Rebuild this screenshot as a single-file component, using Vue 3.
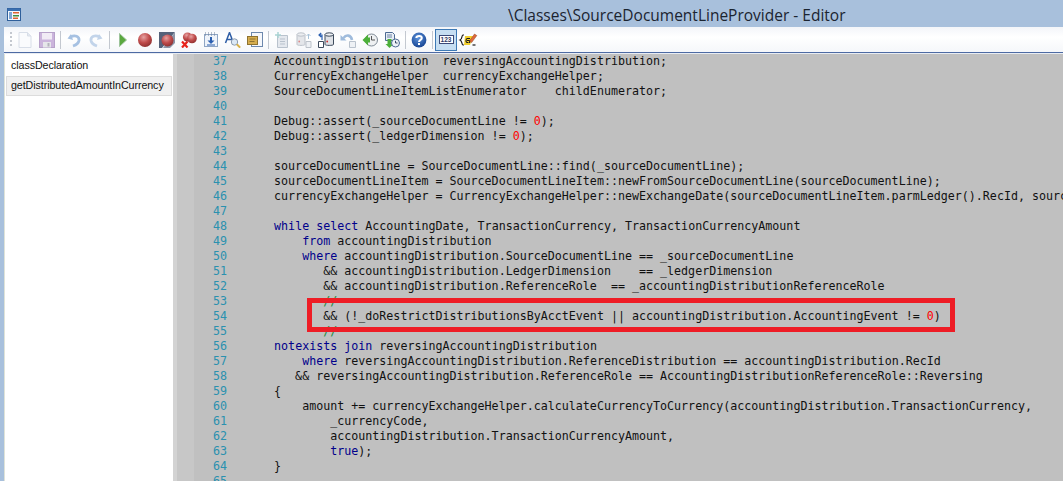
<script setup>
const k = (s) => ({ t: s, c: 'kw' })
const lines = [
  [37, ['    AccountingDistribution  reversingAccountingDistribution;']],
  [38, ['    CurrencyExchangeHelper  currencyExchangeHelper;']],
  [39, ['    SourceDocumentLineItemListEnumerator    childEnumerator;']],
  [40, ['']],
  [41, ['    Debug::assert(_sourceDocumentLine != ', { t: '0', c: 'num' }, ');']],
  [42, ['    Debug::assert(_ledgerDimension != ', { t: '0', c: 'num' }, ');']],
  [43, ['']],
  [44, ['    sourceDocumentLine = SourceDocumentLine::find(_sourceDocumentLine);']],
  [45, ['    sourceDocumentLineItem = SourceDocumentLineItem::newFromSourceDocumentLine(sourceDocumentLine);']],
  [46, ['    currencyExchangeHelper = CurrencyExchangeHelper::newExchangeDate(sourceDocumentLineItem.parmLedger().RecId, sourceDocumentLineItem.parmAccountingDate());']],
  [47, ['']],
  [48, ['    ', k('while select'), ' AccountingDate, TransactionCurrency, TransactionCurrencyAmount']],
  [49, ['        ', k('from'), ' accountingDistribution']],
  [50, ['        ', k('where'), ' accountingDistribution.SourceDocumentLine == _sourceDocumentLine']],
  [51, ['           && accountingDistribution.LedgerDimension    == _ledgerDimension']],
  [52, ['           && accountingDistribution.ReferenceRole  == _accountingDistributionReferenceRole']],
  [53, [{ t: '           //', c: 'cm' }]],
  [54, ['           && (!_doRestrictDistributionsByAcctEvent || accountingDistribution.AccountingEvent != ', { t: '0', c: 'num' }, ')']],
  [55, [{ t: '           //', c: 'cm' }]],
  [56, ['    ', k('notexists join'), ' reversingAccountingDistribution']],
  [57, ['        ', k('where'), ' reversingAccountingDistribution.ReferenceDistribution == accountingDistribution.RecId']],
  [58, ['       && reversingAccountingDistribution.ReferenceRole == AccountingDistributionReferenceRole::Reversing']],
  [59, ['    {']],
  [60, ['        amount += currencyExchangeHelper.calculateCurrencyToCurrency(accountingDistribution.TransactionCurrency,']],
  [61, ['            _currencyCode,']],
  [62, ['            accountingDistribution.TransactionCurrencyAmount,']],
  [63, ['            ', k('true'), ');']],
  [64, ['    }']],
  [65, ['']],
]
const norm = (p) => (typeof p === 'string' ? { t: p, c: '' } : p)
</script>

<template>
  <div class="win">
    <header class="title">
      <svg class="appicon" width="14" height="13" viewBox="0 0 14 13">
        <rect x="0.5" y="0.5" width="13" height="12" fill="#f4f7fb" stroke="#2f5f9a" />
        <rect x="0.5" y="0.5" width="13" height="2.5" fill="#3a6fb0" />
        <rect x="2" y="4" width="3" height="7" fill="#7fa6d4" />
        <rect x="6" y="4" width="6" height="1.5" fill="#e0622e" />
        <rect x="6" y="7" width="6" height="1.5" fill="#3f8f3f" />
        <rect x="6" y="9.5" width="5" height="1.5" fill="#e0622e" />
      </svg>
      <span class="title-text">\Classes\SourceDocumentLineProvider - Editor</span>
    </header>

    <div class="toolbar">
      <span class="grip"></span>
      <!-- new -->
      <svg class="ic" viewBox="0 0 16 16"><path d="M2 0.5h8.5l3.5 3.5v11.5H2z" fill="#fafbfd" stroke="#d8dee8"/><path d="M10.5 0.5v3.5h3.5" fill="#e4e9f1" stroke="#d8dee8"/></svg>
      <!-- save disabled -->
      <svg class="ic" viewBox="0 0 16 16"><rect x="0.5" y="0.5" width="15" height="15" fill="#cbb4dc" stroke="#b7a2ca"/><rect x="3" y="1" width="10" height="6.5" fill="#f1ebf5"/><rect x="4" y="10" width="8" height="5.5" fill="#e6e6ea"/><rect x="8.5" y="11" width="2" height="3.5" fill="#b3b3bc"/></svg>
      <span class="sep"></span>
      <!-- undo -->
      <svg class="ic" viewBox="0 0 16 16"><path d="M5 2 L1.5 6.5 L7 8 Z" fill="#a6c1e2"/><path d="M4.5 5 C9 2.5 13.5 4.5 13 8.5 C12.5 11.5 10 13 7 14" fill="none" stroke="#a6c1e2" stroke-width="2.8"/></svg>
      <!-- redo -->
      <svg class="ic" viewBox="0 0 16 16"><path d="M11 2 L14.5 6.5 L9 8 Z" fill="#c2d4ea"/><path d="M11.5 5 C7 2.5 2.5 4.5 3 8.5 C3.5 11.5 6 13 9 14" fill="none" stroke="#c2d4ea" stroke-width="2.8"/></svg>
      <span class="sep"></span>
      <!-- run -->
      <svg class="ic" viewBox="0 0 16 16"><path d="M4.5 1.5 L11.5 8 L4.5 14.5 Z" fill="#5aa83f" stroke="#9cc39a"/></svg>
      <!-- breakpoint -->
      <svg class="ic" viewBox="0 0 16 16"><defs><radialGradient id="ball" cx="40%" cy="30%" r="72%"><stop offset="0" stop-color="#e6a2a2"/><stop offset="0.55" stop-color="#c04c4c"/><stop offset="1" stop-color="#8e3030"/></radialGradient></defs><circle cx="8" cy="8" r="7" fill="url(#ball)"/></svg>
      <!-- enable breakpoint -->
      <svg class="ic" viewBox="0 0 16 16"><path d="M0 0H16L3 16H0Z" fill="#55627a"/><path d="M16 0V11L11 16H4Z" fill="#8c95a7"/><circle cx="8.5" cy="8.5" r="6" fill="url(#ball)"/></svg>
      <!-- remove breakpoints -->
      <svg class="ic" viewBox="0 0 16 16"><circle cx="6.5" cy="5" r="4.6" fill="url(#ball)"/><circle cx="11" cy="6.5" r="4.8" fill="url(#ball)"/><path d="M1 9.5 L6.5 15.5 M6.5 9.5 L1 15.5" stroke="#e8231c" stroke-width="2.2"/></svg>
      <!-- calendar/step -->
      <svg class="ic" viewBox="0 0 16 16"><rect x="1.5" y="2.5" width="13" height="12" fill="#eef3fa" stroke="#8ea5c4"/><path d="M2.5 0.5v3M5.5 0.5v3M8.5 0.5v3M11.5 0.5v3" stroke="#6d7f99" stroke-dasharray="1 1"/><path d="M8 5v5" stroke="#2a5fb0" stroke-width="2"/><path d="M4.5 8.5h7L8 12Z" fill="#2a5fb0"/><path d="M4 13h8" stroke="#2a5fb0"/></svg>
      <!-- A magnifier -->
      <svg class="ic" viewBox="0 0 16 16"><path d="M0.5 11 L4.5 0.5 L8.5 11 M2.2 7.5h4.6" fill="none" stroke="#2f5ea6" stroke-width="1.5"/><circle cx="9.5" cy="10" r="3.2" fill="#dbe8f5" stroke="#8a9bb0"/><path d="M11.8 12.3 L15.2 15.6" stroke="#d9b24a" stroke-width="2"/></svg>
      <!-- scroll -->
      <svg class="ic" viewBox="0 0 16 16"><rect x="4.5" y="0.5" width="11" height="14" fill="#f5f7fb" stroke="#6d88ad"/><rect x="0.5" y="4.5" width="10" height="8" fill="#d6ad4e" stroke="#8e7230"/><path d="M2.5 7h6M2.5 9.5h5" stroke="#8e7230"/></svg>
      <span class="sep"></span>
      <!-- new line doc -->
      <svg class="ic" viewBox="0 0 16 16"><path d="M3.5 3.5h10v12h-10z" fill="#e4e8ee" stroke="#b9c2cd"/><path d="M6 7h5M6 9.5h5M6 12h5" stroke="#b9c2cd"/><path d="M4 0v6M1 3h6" stroke="#a9d3d3" stroke-width="1.5"/></svg>
      <!-- db doc -->
      <svg class="ic" viewBox="0 0 16 16"><path d="M1 2.5v10c0 1.2 8 1.2 8 0v-10Z" fill="#e4e6ea" stroke="#bcc2ca"/><ellipse cx="5" cy="2.5" rx="4" ry="1.7" fill="#eceef1" stroke="#bcc2ca"/><circle cx="3.2" cy="9.5" r="0.9" fill="#d88"/><path d="M10 9.5h5v6h-5z" fill="#eef1f5" stroke="#bcc2ca"/><path d="M12.5 2v5M10.5 4l2-2 2 2" fill="none" stroke="#a9c3d9"/></svg>
      <!-- db arrow -->
      <svg class="ic" viewBox="0 0 16 16"><path d="M7 2.5v10c0 1.2 8.5 1.2 8.5 0v-10Z" fill="#dfe2e7" stroke="#3c4a5c"/><ellipse cx="11.2" cy="2.5" rx="4.2" ry="1.7" fill="#eef0f3" stroke="#3c4a5c"/><circle cx="9.2" cy="9.5" r="0.9" fill="#c33"/><path d="M0.5 9.5h5v6h-5z" fill="#fff" stroke="#3c4a5c"/><path d="M4 8V3H1.8M3.2 1 1 3l2.2 2" fill="none" stroke="#2a5fb0" stroke-width="1.2"/></svg>
      <!-- undo doc -->
      <svg class="ic" viewBox="0 0 16 16"><path d="M3.5 6C6 2.5 11 2.5 12 8" fill="none" stroke="#9fbbdc" stroke-width="2.6"/><path d="M0.5 3 L6.5 8.5 H0.5 Z" fill="#9fbbdc"/><path d="M9.5 9.5h6v6h-6z" fill="#eef1f5" stroke="#b9c2cd"/></svg>
      <!-- clock -->
      <svg class="ic" viewBox="0 0 16 16"><circle cx="9.5" cy="8" r="6" fill="#eef0f2" stroke="#7f8a96"/><path d="M9.5 4v4h3.5" fill="none" stroke="#555"/><path d="M6 2.5 L0.5 8 L6 13.5 V10.5 H8 V5.5 H6 Z" fill="#4caf3a"/></svg>
      <!-- doc clock -->
      <svg class="ic" viewBox="0 0 16 16"><path d="M1.5 0.5h7l2 2v6h-9z" fill="#e7edf5" stroke="#4d6a93"/><path d="M3 3h5M3 5h5" stroke="#6c84a6"/><path d="M3.5 7h4v5h2L5.5 16 1.5 12h2z" fill="#4caf3a"/><circle cx="11.5" cy="11" r="4" fill="#eef2f7" stroke="#4d6a93"/><path d="M11.5 8.8V11h2" fill="none" stroke="#384a66"/></svg>
      <span class="sep"></span>
      <!-- help -->
      <svg class="ic" viewBox="0 0 16 16"><defs><radialGradient id="help" cx="45%" cy="35%" r="70%"><stop offset="0" stop-color="#5f95dd"/><stop offset="1" stop-color="#123f8e"/></radialGradient></defs><circle cx="8" cy="8" r="7.4" fill="url(#help)"/><path d="M5.3 6C5.6 3.4 10.8 3.4 10.8 6C10.8 7.9 8 7.8 8 10" fill="none" stroke="#fff" stroke-width="2"/><rect x="7" y="11" width="2" height="2" fill="#fff"/></svg>
      <span class="sep"></span>
      <!-- line numbers toggle -->
      <span class="toggle"><span class="digits">123</span></span>
      <!-- pencil braces -->
      <svg class="ic" viewBox="0 0 18 16"><path d="M5 3H4C2.5 3 3.5 7 1 8c2.5 1 1.5 5 3 5h1" fill="none" stroke="#1a1a1a" stroke-width="1.2"/><path d="M6 4h8l-3 9H5z" fill="#f2cf2c"/><path d="M11 6.5H8.2C6.8 6.5 6.5 10.5 8.2 10.5H9.5M8 8.5h2.6V11" fill="none" stroke="#1a1a1a" stroke-width="1.1"/><path d="M10.5 9 L15.5 2 L17.8 3.6 L12.6 10.6 Z" fill="#e0683a" stroke="#8a3f22" stroke-width="0.5"/><path d="M13.5 13h3" stroke="#1a1a1a" stroke-width="1.2"/></svg>
    </div>

    <div class="body">
      <aside class="list">
        <div class="item">classDeclaration</div>
        <div class="item sel">getDistributedAmountInCurrency</div>
      </aside>
      <div class="margin"></div>
      <main class="code">
        <div v-for="l in lines" :key="l[0]" class="row">
          <span class="num-col">{{ l[0] }}</span>
          <span class="src"><span v-for="(p, i) in l[1]" :key="i" :class="norm(p).c">{{ norm(p).t }}</span></span>
        </div>
        <div class="hl"></div>
      </main>
    </div>
  </div>
</template>

<style>
html, body { margin: 0; overflow: hidden; background: #a8c0dc; }
</style>

<style scoped>
.win {
  width: 1063px;
  height: 481px;
  overflow: hidden;
  background: #a8c0dc;
  display: flex;
  flex-direction: column;
}
.title {
  height: 27px;
  flex: none;
  position: relative;
  display: flex;
  align-items: center;
  padding-left: 508px;
  box-sizing: border-box;
}
.appicon { position: absolute; left: 7px; top: 8px; }
.title-text {
  font: 15.5px/1 "Open Sans", "Liberation Sans", sans-serif;
  color: #1b2430;
  padding-top: 5px;
  white-space: nowrap;
}
.toolbar {
  height: 25px;
  flex: none;
  margin-left: 4px;
  padding-left: 6px;
  display: flex;
  align-items: center;
  background: linear-gradient(#f3f5f9, #ffffff 40%, #f5f7fa);
  border-bottom: 1px solid #4d6aa3;
}
.grip {
  width: 2px;
  height: 15px;
  margin-right: 2px;
  background: repeating-linear-gradient(#c4c8cf 0 2px, transparent 2px 4px);
  flex: none;
}
.ic { width: 22px; height: 16px; flex: none; }
.sep { width: 1px; height: 18px; background: #c3c8d0; margin: 0 2px; flex: none; }
.toggle {
  width: 22px;
  height: 22px;
  box-sizing: border-box;
  border: 1px solid #3d79b5;
  background: #c6def2;
  display: flex;
  align-items: center;
  justify-content: center;
  flex: none;
}
.digits {
  width: 15px;
  height: 9px;
  box-sizing: border-box;
  border: 1px solid #3b4a78;
  background: #fff;
  color: #2f3b66;
  font: bold 6.5px/7px "Liberation Sans", sans-serif;
  text-align: center;
}
.body { flex: 1; display: flex; min-height: 0; margin-left: 4px; border-top: 1px solid #e8ecf2; }
.list {
  width: 169px;
  flex: none;
  background: #fff;
  border-left: 1px solid #dfe3d8;
  padding: 2px 1px 0 1px;
  box-sizing: border-box;
  font: 10.7px/19px "Liberation Sans", Arial, sans-serif;
  letter-spacing: -0.08px;
  color: #111;
}
.item { height: 20px; padding-left: 5px; }
.item.sel {
  background: #f0f0f0;
  box-shadow: inset 0 0 0 1px #dcdcdc;
}
.margin { width: 21px; flex: none; background: #c7c7c7; border-left: 4px solid #d3d3d3; box-sizing: border-box; }
.code {
  flex: 1;
  min-width: 0;
  background: #c0c0c0;
  position: relative;
  overflow: hidden;
  font: 11.67px/15px "DejaVu Sans Mono", monospace;
  color: #111;
}
.row { display: flex; height: 15px; white-space: pre; }
.num-col { width: 33px; text-align: right; color: #2b91af; flex: none; }
.src { margin-left: 19px; }
.kw { color: #00008b; }
.num { color: #f00; }
.cm { color: #1e8a3c; }
.hl {
  position: absolute;
  left: 113px;
  top: 244px;
  width: 648px;
  height: 34px;
  box-sizing: border-box;
  border: 5px solid #ee1c25;
}
</style>
